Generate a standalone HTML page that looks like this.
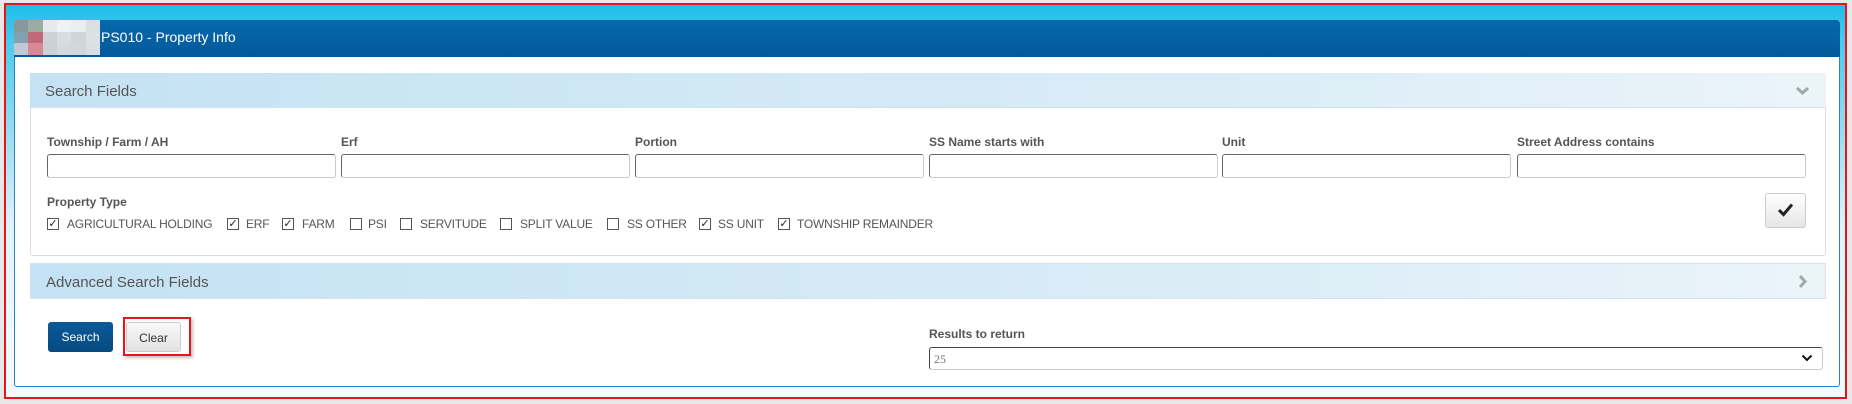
<!DOCTYPE html>
<html><head><meta charset="utf-8"><style>
*{box-sizing:border-box;margin:0;padding:0}
body{width:1852px;height:404px;position:relative;background:#e8e8e8;font-family:"Liberation Sans",Arial,sans-serif;overflow:hidden}
.a{position:absolute}
#frame{left:4px;top:3px;width:1843px;height:396px;border:2px solid #e5161b;background:linear-gradient(180deg,#1cbfe8 0px,#4fcbec 40px,#dff3fa 220px,#f5fbfd 400px)}
#panel{left:14px;top:20px;width:1826px;height:367px;background:#fff;border:1px solid #2f7fc0;border-radius:4px 4px 3px 3px}
#hdr{left:14px;top:20px;width:1826px;height:37px;background:linear-gradient(180deg,#0669ad,#04599a);border-radius:4px 4px 0 0}
#logo{left:14px;top:20px;width:86px;height:35px;background:#eee;display:grid;grid-template-columns:repeat(6,1fr);grid-template-rows:repeat(3,1fr);opacity:.95}
#logo div{}
.title{left:101px;top:29px;color:#fff;font-size:14px}
.box{left:30px;width:1796px;border:1px solid #d6dde2;border-radius:3px;background:#fff}
.bh{left:30px;width:1796px;height:35px;background:linear-gradient(90deg,#c4e2f3,#dcedf7 70%,#ebf4f9);border-bottom:1px solid #d3e3ec;color:#555;font-size:15px;padding:10px 0 0 15px}
.lbl{font-size:12px;font-weight:bold;color:#555}
.inp{top:154px;width:289px;height:24px;border:1px solid #666;border-bottom-color:#ccc;border-right-color:#ccc;border-radius:3px;background:#fff}
.cb{top:218px;width:12px;height:12px;border:1px solid #555;background:#fff;font-size:11px;line-height:10px;text-align:center;color:#222}
.ct{top:217px;font-size:12px;color:#555;letter-spacing:-0.2px}
.btn{border-radius:3px;font-size:12px;text-align:center;line-height:30px}
</style></head><body>
<div class="a" id="frame"></div>
<div class="a" id="panel"></div>
<div class="a" id="hdr"></div>
<div class="a" id="logo">
<div style="background:#8c9c98"></div><div style="background:#a4b0a0"></div><div style="background:#f2f2f2"></div><div style="background:#fafafa"></div><div style="background:#f6f6f6"></div><div style="background:#e6e6e6"></div>
<div style="background:#8aa4b0"></div><div style="background:#cc6a76"></div><div style="background:#d8d8d8"></div><div style="background:#e4e4e4"></div><div style="background:#dcdcdc"></div><div style="background:#e8e8e8"></div>
<div style="background:#c8d0d4"></div><div style="background:#e88a96"></div><div style="background:#d8d8d8"></div><div style="background:#e0e0e0"></div><div style="background:#dedede"></div><div style="background:#e6e6e6"></div>
</div>
<div class="a title">PS010 - Property Info</div>

<div class="a box" style="top:73px;height:183px"></div>
<div class="a bh" style="top:73px">Search Fields</div>
<svg class="a" style="left:1795px;top:85px" width="15" height="12" viewBox="0 0 15 12"><path d="M2 3l5.5 5 5.5-5" fill="none" stroke="#a0a8ae" stroke-width="3"/></svg>

<div class="a lbl" style="left:47px;top:135px">Township / Farm / AH</div>
<div class="a lbl" style="left:341px;top:135px">Erf</div>
<div class="a lbl" style="left:635px;top:135px">Portion</div>
<div class="a lbl" style="left:929px;top:135px">SS Name starts with</div>
<div class="a lbl" style="left:1222px;top:135px">Unit</div>
<div class="a lbl" style="left:1517px;top:135px">Street Address contains</div>
<div class="a inp" style="left:47px"></div>
<div class="a inp" style="left:341px"></div>
<div class="a inp" style="left:635px"></div>
<div class="a inp" style="left:929px"></div>
<div class="a inp" style="left:1222px"></div>
<div class="a inp" style="left:1517px"></div>

<div class="a lbl" style="left:47px;top:195px">Property Type</div>
<div class="a cb" style="left:47px">✓</div><div class="a ct" style="left:67px">AGRICULTURAL HOLDING</div>
<div class="a cb" style="left:227px">✓</div><div class="a ct" style="left:246px">ERF</div>
<div class="a cb" style="left:282px">✓</div><div class="a ct" style="left:302px">FARM</div>
<div class="a cb" style="left:350px"></div><div class="a ct" style="left:368px">PSI</div>
<div class="a cb" style="left:400px"></div><div class="a ct" style="left:420px">SERVITUDE</div>
<div class="a cb" style="left:500px"></div><div class="a ct" style="left:520px">SPLIT VALUE</div>
<div class="a cb" style="left:607px"></div><div class="a ct" style="left:627px">SS OTHER</div>
<div class="a cb" style="left:699px">✓</div><div class="a ct" style="left:718px">SS UNIT</div>
<div class="a cb" style="left:778px">✓</div><div class="a ct" style="left:797px">TOWNSHIP REMAINDER</div>

<div class="a btn" style="left:1765px;top:193px;width:41px;height:35px;border:1px solid #ccc;background:linear-gradient(#fff,#e6e6e6)"></div>
<svg class="a" style="left:1777px;top:202px" width="17" height="15" viewBox="0 0 17 15"><path d="M2 8l4.5 4.5L15 2.5" fill="none" stroke="#222" stroke-width="3"/></svg>

<div class="a box" style="top:263px;height:36px;border:none"></div>
<div class="a bh" style="top:263px;height:36px;border:1px solid #d3e3ec">Advanced Search Fields</div>
<svg class="a" style="left:1797px;top:274px" width="12" height="15" viewBox="0 0 12 15"><path d="M3 2l5 5.5L3 13" fill="none" stroke="#a0a8ae" stroke-width="3"/></svg>

<div class="a btn" style="left:48px;top:322px;width:65px;height:30px;background:linear-gradient(#0b5a98,#054a80);color:#fff">Search</div>
<div class="a" style="left:123px;top:317px;width:68px;height:39px;border:2px solid #e5161b;box-shadow:2px 2px 3px rgba(0,0,0,.25)"></div>
<div class="a btn" style="left:126px;top:322px;width:55px;height:30px;background:linear-gradient(#f8f8f8,#e2e2e2);border:1px solid #ccc;color:#333">Clear</div>

<div class="a lbl" style="left:929px;top:327px">Results to return</div>
<div class="a" style="left:929px;top:347px;width:894px;height:23px;border:1px solid #444;border-bottom-color:#ccc;border-right-color:#ccc;border-radius:3px;background:#fff;font-family:'Liberation Serif',serif;font-size:12px;color:#777;padding:4px 0 0 4px">25</div>
<svg class="a" style="left:1801px;top:353px" width="12" height="10" viewBox="0 0 12 10"><path d="M1.5 2.5l4.5 4.5 4.5-4.5" fill="none" stroke="#111" stroke-width="2"/></svg>
</body></html>
